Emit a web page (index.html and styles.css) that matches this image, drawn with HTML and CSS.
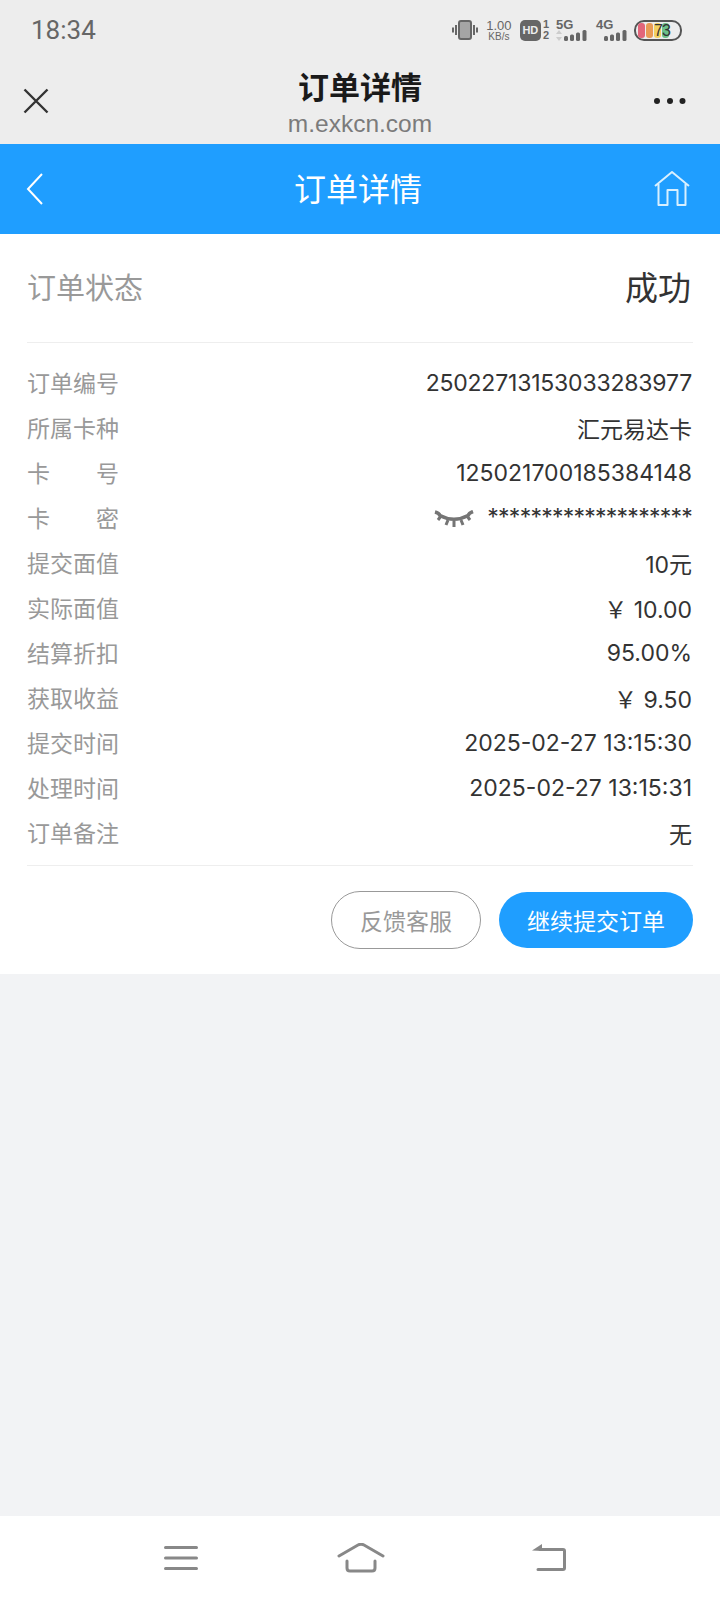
FILE: index.html
```html
<!DOCTYPE html>
<html lang="zh-CN">
<head>
    <meta charset="UTF-8">
    <meta name="viewport" content="width=device-width, initial-scale=1.0">
    <title>订单详情</title>
    <link rel="stylesheet" href="styles.css">
</head>
<body>
    <div class="top">
        <!-- 状态栏 -->
        <div class="status">
            <span class="time">18:34</span>
            <div class="status-icons">
                <svg width="26" height="22" viewBox="0 0 26 22">
                    <rect x="7" y="2" width="12" height="18" rx="2" fill="#a5a5a5" stroke="#666" stroke-width="2"/>
                    <path d="M4 6v10M1 8.500v5M22 6v10M25 8.500v5" stroke="#666" stroke-width="2" fill="none"/>
                </svg>
                <div class="speed"><span>1.00</span><span class="speed-unit">KB/s</span></div>
                <div class="hd"><span class="hd-box">HD</span><div class="hd-nums"><span>1</span><span>2</span></div></div>
                <div class="net">
                    <span class="net-label">5G</span>
                    <svg width="31" height="11" viewBox="0 0 31 11"><path d="M3 0l3 4H0zM3 11l3-4H0z" fill="#ccc"/><rect x="8" y="6" width="4" height="5" rx="1.500" fill="#666"/><rect x="14" y="4.500" width="4" height="6.500" rx="1.500" fill="#666"/><rect x="20" y="2.500" width="4" height="8.500" rx="1.500" fill="#666"/><rect x="26.500" y="0" width="4" height="11" rx="1.500" fill="#666"/></svg>
                </div>
                <div class="net">
                    <span class="net-label">4G</span>
                    <svg width="31" height="11" viewBox="0 0 31 11"><rect x="8" y="6" width="4" height="5" rx="1.500" fill="#666"/><rect x="14" y="4.500" width="4" height="6.500" rx="1.500" fill="#666"/><rect x="20" y="2.500" width="4" height="8.500" rx="1.500" fill="#666"/><rect x="26.500" y="0" width="4" height="11" rx="1.500" fill="#666"/></svg>
                </div>
                <div class="battery">
                    <i class="cell c1"></i><i class="cell c2"></i><i class="cell c3"></i><i class="cell c4"></i>
                    <span class="battery-num">73</span>
                </div>
            </div>
        </div>
        <!-- 浏览器标题 -->
        <div class="browser">
            <svg width="26" height="26" viewBox="0 0 26 26"><path d="M1.500 1.500l23 23M24.500 1.500l-23 23" stroke="#333" stroke-width="2.400" fill="none"/></svg>
            <div class="browser-title">
                <div class="browser-name">订单详情</div>
                <div class="browser-url">m.exkcn.com</div>
            </div>
            <svg class="ic-more" width="32" height="6" viewBox="0 0 32 6"><circle cx="3" cy="3" r="3" fill="#222"/><circle cx="16" cy="3" r="3" fill="#222"/><circle cx="28.500" cy="3" r="3" fill="#222"/></svg>
        </div>
    </div>

    <div class="bar">
        <svg width="18" height="32" viewBox="0 0 18 32"><path d="M16 1L2 16l14 15" stroke="#fff" stroke-width="2" fill="none"/></svg>
        <div class="bar-title">订单详情</div>
        <svg class="ic-home" width="36" height="36" viewBox="0 0 36 36"><path d="M1 15L18 1l17 14M4.500 13v21h9V19h10v15h8V13" stroke="#d8f0ff" stroke-width="2" fill="none" stroke-linejoin="round"/></svg>
    </div>

    <div class="card">
        <div class="state">
            <span class="state-label">订单状态</span>
            <span class="state-value">成功</span>
        </div>
        <div class="rows">
            <div class="row"><span class="key">订单编号</span><span class="val val-code">25022713153033283977</span></div>
            <div class="row"><span class="key">所属卡种</span><span class="val">汇元易达卡</span></div>
            <div class="row"><span class="key key-wide"><span>卡</span><span>号</span></span><span class="val">125021700185384148</span></div>
            <div class="row">
                <span class="key key-wide"><span>卡</span><span>密</span></span>
                <span class="val val-secret">
                    <svg class="ic-eye" width="40" height="18" viewBox="0 0 40 18"><path d="M1 2q4 1 5 3.500Q20 13 34 5.500q1-2.500 5-4" stroke="#757575" stroke-width="3.500" fill="none"/><path d="M7 6l-3 4M14 10l-2 5M20 11v6M27 10l2 5M33 6l3 4" stroke="#757575" stroke-width="3" fill="none"/></svg>
                    <span class="stars">*******************</span>
                </span>
            </div>
            <div class="row"><span class="key">提交面值</span><span class="val">10元</span></div>
            <div class="row"><span class="key">实际面值</span><span class="val">￥ 10.00</span></div>
            <div class="row"><span class="key">结算折扣</span><span class="val">95.00%</span></div>
            <div class="row"><span class="key">获取收益</span><span class="val">￥ 9.50</span></div>
            <div class="row"><span class="key">提交时间</span><span class="val">2025-02-27 13:15:30</span></div>
            <div class="row"><span class="key">处理时间</span><span class="val">2025-02-27 13:15:31</span></div>
            <div class="row"><span class="key">订单备注</span><span class="val">无</span></div>
        </div>
        <div class="actions">
            <button class="btn btn-line">反馈客服</button>
            <button class="btn btn-main">继续提交订单</button>
        </div>
    </div>

    <div class="spacer"></div>

    <!-- 底部导航 -->
    <div class="nav">
        <svg width="34" height="24" viewBox="0 0 34 24"><path d="M1.500 1.500h31M1.500 12h31M1.500 22.500h31" stroke="#888" stroke-width="3" stroke-linecap="round" fill="none"/></svg>
        <svg class="nav-home" width="48" height="30" viewBox="0 0 48 30"><path d="M2 13L21 2q3-1.500 6 0l19 11M10 18v7q0 3 3 3h22q3 0 3-3v-7" stroke="#888" stroke-width="3" stroke-linecap="round" fill="none"/></svg>
        <svg width="34" height="28" viewBox="0 0 34 28"><path d="M8 5.500h23q1.500 0 1.500 1.500v17q0 1.500-1.500 1.500H6" stroke="#888" stroke-width="3" stroke-linecap="round" fill="none"/><path d="M0 6.500L10 0v7z" fill="#888"/></svg>
    </div>
</body>
</html>
```

FILE: styles.css
```css
* {
    box-sizing: border-box;
}
html, body {
    margin: 0;
    padding: 0;
}
body {
    width: 720px;
    height: 1600px;
    display: flex;
    flex-direction: column;
    background-color: #f2f3f5;
    font-family: "Inter", "Noto Sans CJK SC", sans-serif;
    color: #333;
}
.top {
    height: 144px;
    background-color: #ededed;
}
.status {
    height: 60px;
    padding: 0 38px 0 31px;
    display: flex;
    align-items: center;
    justify-content: space-between;
}
.time {
    font-family: "Roboto", sans-serif;
    font-size: 26px;
    color: #666;
}
.status-icons {
    display: flex;
    align-items: center;
    color: #666;
}
.speed {
    width: 26px;
    margin-left: 8px;
    display: flex;
    flex-direction: column;
    align-items: center;
    font-family: "Liberation Sans", sans-serif;
    font-size: 13px;
    line-height: 13px;
}
.speed-unit {
    font-size: 10px;
    line-height: 9px;
}
.hd {
    margin-left: 8px;
    display: flex;
    align-items: center;
}
.hd-box {
    width: 21px;
    height: 21px;
    border-radius: 5px;
    background-color: #666;
    color: #ededed;
    font: bold 11px/21px "Liberation Sans", sans-serif;
    text-align: center;
}
.hd-nums {
    margin-left: 2px;
    display: flex;
    flex-direction: column;
    font: bold 11px/11px "Liberation Sans", sans-serif;
}
.net {
    width: 31px;
    margin-left: 9px;
    display: flex;
    flex-direction: column;
}
.hd + .net {
    margin-left: 7px;
}
.net-label {
    height: 10px;
    font: bold 13px/10px "Liberation Sans", sans-serif;
}
.battery {
    position: relative;
    margin-left: 7px;
    width: 48px;
    height: 21px;
    border: 2px solid #555;
    border-radius: 10px;
    padding: 1px 2px;
    display: flex;
    gap: 1px;
}
.cell {
    width: 7px;
    border-radius: 3px;
}
.c1 { background-color: #e2657a; }
.c2 { background-color: #e89a55; }
.c3 { background-color: #f2d05f; }
.c4 { background-color: #6cc08a; }
.battery-num {
    position: absolute;
    left: 18px;
    top: 0;
    font: 16px/17px "Liberation Sans", sans-serif;
    letter-spacing: -1px;
    color: #333;
}
.browser {
    height: 84px;
    padding: 0 23px 2px;
    display: grid;
    grid-template-columns: 1fr auto 1fr;
    align-items: center;
}
.ic-more {
    justify-self: end;
    margin-right: 11px;
}
.browser-title {
    padding-top: 5px;
    text-align: center;
}
.browser-name {
    font-size: 31px;
    line-height: 38px;
    font-weight: 700;
    color: #1a1a1a;
}
.browser-url {
    margin-top: 3px;
    font-family: "Liberation Sans", sans-serif;
    font-size: 24.500px;
    line-height: 28px;
    color: #7b7b7b;
}
.bar {
    height: 90px;
    padding: 0 30px 0 26px;
    display: grid;
    grid-template-columns: 1fr auto 1fr;
    align-items: center;
    background-color: #1f9eff;
    color: #fff;
}
.bar-title {
    font-size: 32px;
    padding-bottom: 4px;
}
.ic-home {
    justify-self: end;
}
.card {
    height: 740px;
    padding: 0 27px;
    background-color: #fff;
}
.state {
    height: 109px;
    padding: 0 2px 4px 0;
    display: flex;
    align-items: center;
    justify-content: space-between;
    border-bottom: 1px solid #eee;
}
.state-label {
    font-size: 29px;
    color: #999;
}
.state-value {
    font-size: 33px;
    color: #333;
}
.rows {
    padding: 16px 0 11px;
    border-bottom: 1px solid #eee;
}
.row {
    height: 45px;
    display: flex;
    align-items: center;
    justify-content: space-between;
    font-size: 23px;
}
.key {
    width: 92px;
    color: #999;
}
.key-wide {
    display: flex;
    justify-content: space-between;
}
.val {
    margin-right: 1px;
    padding-top: 3px;
    color: #333;
}
.val-code {
    letter-spacing: -0.200px;
}
.val-secret {
    display: flex;
    align-items: center;
    gap: 13px;
    padding-top: 0;
}
.ic-eye {
    margin-top: 4px;
}
.stars {
    letter-spacing: -0.750px;
}
.actions {
    padding-top: 25px;
    display: flex;
    align-items: center;
    justify-content: flex-end;
    gap: 18px;
}
.btn {
    border-radius: 29px;
    font-family: inherit;
    font-size: 23px;
    padding: 0;
}
.btn-line {
    width: 150px;
    height: 58px;
    border: 1px solid #999;
    background-color: #fff;
    color: #999;
}
.btn-main {
    width: 194px;
    height: 56px;
    border: 0;
    background-color: #1f9eff;
    color: #fff;
}
.spacer {
    flex: 1;
}
.nav {
    height: 84px;
    padding: 0 154px 0 164px;
    display: flex;
    align-items: center;
    justify-content: space-between;
    background-color: #fff;
}
.nav-home {
    margin-right: 8px;
}
```
